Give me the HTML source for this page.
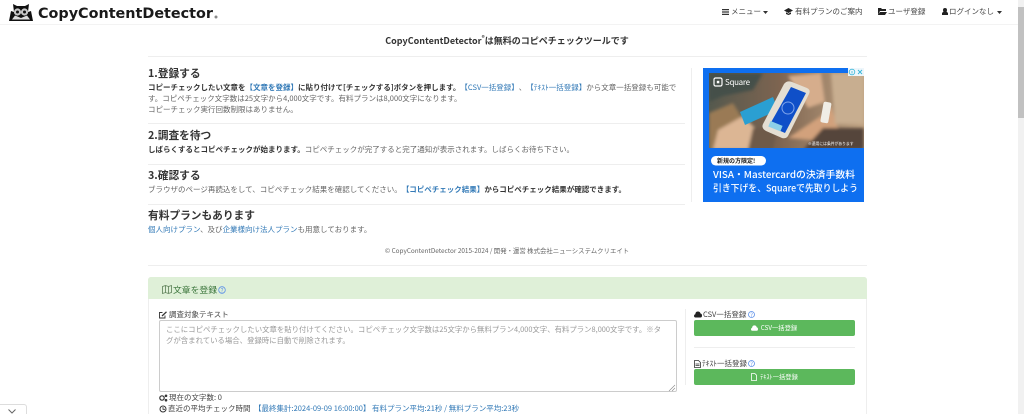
<!DOCTYPE html>
<html lang="ja">
<head>
<meta charset="utf-8">
<title>CopyContentDetector</title>
<style>
html,body{margin:0;padding:0;width:1024px;height:414px;overflow:hidden;background:#fff}
body{position:relative;font-family:"Noto Sans CJK JP","Liberation Sans",sans-serif;color:#333;text-spacing-trim:space-all}
#w{position:absolute;left:0;top:0;width:1024px;height:414px;overflow:hidden;filter:blur(.3px)}
.t{position:absolute;white-space:nowrap;font-size:7.5px;line-height:11px;color:#444}
.h{position:absolute;white-space:nowrap;font-size:10.7px;line-height:16px;font-weight:700;color:#333}
.r{position:absolute;height:1px;background:#eee}
a{color:#337ab7;text-decoration:none}
b{font-weight:700;color:#333}
.g{color:#666}
.btn{position:absolute;left:694px;width:161px;height:16px;background:#5cb85c;border-radius:2px;color:#fff;font-size:6.300px;line-height:16px;text-align:center}
svg{position:absolute;overflow:visible}
svg text{font-family:"Noto Sans CJK JP","Liberation Sans",sans-serif}
</style>
</head>
<body>
<div id="w">
<!-- header -->
<div class="r" style="left:0;top:24px;width:1018px;background:#f3f3f3"></div>
<svg style="left:9px;top:3px" width="24" height="18" viewBox="0 0 24 18">
<path d="M0 18 L2 8 L5 9 L4 1 L8 3 L16 3 L20 1 L19 9 L22 8 L24 18 Z" fill="#111"/>
<circle cx="8.500" cy="9" r="3.600" fill="#c8c8c8"/><circle cx="15.500" cy="9" r="3.600" fill="#c8c8c8"/>
<circle cx="8.500" cy="9" r="1.500" fill="#111"/><circle cx="15.500" cy="9" r="1.500" fill="#111"/>
<path d="M3 16.500 L6 12.500 L12 15 L18 12.500 L21 16.500 Z" fill="#ddd"/>
</svg>
<svg style="left:38px;top:4px" width="182" height="18">
<text x="0" y="14" style="font-family:'DejaVu Sans','Liberation Sans',sans-serif" font-weight="700" font-size="14.500" fill="#1a1a1a" textLength="175" lengthAdjust="spacingAndGlyphs">CopyContentDetector</text>
<circle cx="178" cy="13" r="1.500" fill="#888"/>
</svg>

<svg style="left:722px;top:8.500px" width="7" height="6" fill="#333"><path d="M0 0H7V1.200H0ZM0 2.400H7V3.600H0ZM0 4.800H7V6H0Z"/></svg>
<div class="t" style="left:731px;top:6px">メニュー</div>
<svg style="left:763px;top:10.500px" width="5" height="3" fill="#333"><path d="M0 0H5L2.500 3Z"/></svg>
<svg style="left:784px;top:8px" width="9" height="7" fill="#222"><path d="M0 2.500L4.500 0L9 2.500L4.500 5ZM2 4.300V6L4.500 7L7 6V4.300L4.500 5.700Z"/></svg>
<div class="t" style="left:795px;top:6px">有料プランのご案内</div>
<svg style="left:878px;top:8px" width="9" height="7"><path d="M0 0H3L4 1H8V3H2L0 7ZM2 4H9L7 7H0Z" fill="#222"/></svg>
<div class="t" style="left:888px;top:6px">ユーザ登録</div>
<svg style="left:942px;top:8px" width="6" height="7"><circle cx="3" cy="2" r="2" fill="#222"/><path d="M0 7V5L1.500 3.500H4.500L6 5V7Z" fill="#222"/></svg>
<div class="t" style="left:949px;top:6px">ログインなし</div>
<svg style="left:997px;top:10.500px" width="5" height="3" fill="#333"><path d="M0 0H5L2.500 3Z"/></svg>

<!-- title -->
<div class="t" style="left:0;top:34px;width:1014px;text-align:center;font-size:9px;line-height:14px;font-weight:700;color:#333">CopyContentDetector<sup style="font-size:6px;line-height:0">®</sup>は無料のコピペチェックツールです</div>
<div class="r" style="left:148px;top:56px;width:719px"></div>

<!-- steps -->
<div class="h" style="left:148px;top:66px">1.登録する</div>
<div class="t g" style="left:148px;top:82px"><b>コピーチェックしたい文章を</b><a href="#"><b style="color:#337ab7">【文章を登録】</b></a><b>に貼り付けて[チェックする]ボタンを押します。</b><a href="#">【CSV一括登録】</a>、<a href="#">【ﾃｷｽﾄ一括登録】</a>から文章一括登録も可能で</div>
<div class="t g" style="left:148px;top:93px">す。コピペチェック文字数は25文字から4,000文字です。有料プランは8,000文字になります。</div>
<div class="t g" style="left:148px;top:104px">コピーチェック実行回数制限はありません。</div>
<div class="r" style="left:148px;top:123px;width:537px"></div>

<div class="h" style="left:148px;top:128px">2.調査を待つ</div>
<div class="t g" style="left:148px;top:144px"><b>しばらくするとコピペチェックが始まります。</b>コピペチェックが完了すると完了通知が表示されます。しばらくお待ち下さい。</div>
<div class="r" style="left:148px;top:164px;width:537px"></div>

<div class="h" style="left:148px;top:168px">3.確認する</div>
<div class="t g" style="left:148px;top:184px">ブラウザのページ再読込をして、コピペチェック結果を確認してください。<a href="#"><b style="color:#337ab7">【コピペチェック結果】</b></a><b>からコピペチェック結果が確認できます。</b></div>
<div class="r" style="left:148px;top:204px;width:537px"></div>

<div class="h" style="left:148px;top:208px">有料プランもあります</div>
<div class="t g" style="left:148px;top:224px"><a href="#">個人向けプラン</a>、及び<a href="#">企業様向け法人プラン</a>も用意しております。</div>

<div class="r" style="left:691px;top:68px;width:1px;height:134px"></div>

<!-- ad -->
<svg style="left:703px;top:68px" width="162" height="134" viewBox="0 0 162 134">
<defs>
<clipPath id="ph"><rect x="6" y="5" width="155" height="75"/></clipPath>
<filter id="bl"><feGaussianBlur stdDeviation="1.500"/></filter>
<linearGradient id="bg" x1="0" y1="0" x2="1" y2="0"><stop offset="0" stop-color="#55594e"/><stop offset=".45" stop-color="#7d6450"/><stop offset="1" stop-color="#bfa282"/></linearGradient>
</defs>
<rect width="161" height="134" fill="#0e6ff0"/>
<g clip-path="url(#ph)">
<rect x="6" y="5" width="155" height="75" fill="url(#bg)"/>
<g filter="url(#bl)">
<path d="M6 5H60L50 22L20 28L6 34Z" fill="#454f4a"/>
<path d="M6 45L30 35L45 60L40 82H6Z" fill="#9a7a54"/>
<path d="M10 82L15 62L40 48L52 60L47 82Z" fill="#dcb694"/>
<path d="M85 8L118 5L122 34L105 40Z" fill="#d6ad8c"/>
<path d="M85 70L118 48L128 38L135 60L110 72Z" fill="#d2a17c"/>
<path d="M120 60H161V82H100Z" fill="#54443a"/>
<path d="M128 5H161V56H132Z" fill="#c8ae90"/>
<path d="M50 60L75 58L70 82H45Z" fill="#6e5a4a"/>
</g>
<path d="M37 44L70 29L75 42L42 57Z" fill="#2a9fd2"/>
<rect x="119" y="34" width="8" height="21" rx="2" fill="#f0ede6" transform="rotate(10 123 44)"/>
<path d="M89 14L104 20Q108 22 106 26L85 68Q83 71 79 70L63 63Q58 60 60 56L81 16Q84 12 89 14Z" fill="#e4ded2"/>
<path d="M88 19L103 25L82 65L66 58Z" fill="#0f4fc8"/>
<circle cx="85" cy="40" r="6" fill="none" stroke="#7ea4ec" stroke-width="1"/>
<rect x="66" y="55" width="13" height="6" fill="#8dd0e8" transform="rotate(22 72 58)"/>
</g>
<rect x="11" y="10" width="8" height="8" rx="1.500" fill="none" stroke="#fff" stroke-width="1.200"/>
<rect x="13.800" y="12.800" width="2.500" height="2.500" fill="#fff"/>
<text x="22" y="17" font-size="8" fill="#fff" textLength="25">Square</text>
<text x="105" y="77" font-size="3.800" fill="#fff">※適用には条件があります</text>
<rect x="8" y="88" width="55" height="9.500" rx="4.700" fill="#fff"/>
<text x="14" y="95" font-size="6" font-weight="700" fill="#222">新規の方限定!</text>
<text x="10" y="110" font-size="9.500" font-weight="500" fill="#fff" textLength="142" lengthAdjust="spacingAndGlyphs">VISA・Mastercardの決済手数料</text>
<text x="10" y="123.500" font-size="9.500" font-weight="500" fill="#fff" textLength="145" lengthAdjust="spacingAndGlyphs">引き下げを、Squareで先取りしよう</text>
<rect x="145" y="0" width="16" height="8" fill="#eef6fb"/>
<circle cx="149" cy="4" r="2.800" fill="none" stroke="#35b5d8" stroke-width=".8"/>
<path d="M149 3V5.500" stroke="#35b5d8" stroke-width=".8"/>
<path d="M155 2L159 6M159 2L155 6" stroke="#35b5d8" stroke-width=".9"/>
</svg>

<!-- footer line -->
<div class="t g" style="left:192px;top:245px;width:630px;text-align:center;font-size:6.400px">© CopyContentDetector 2015-2024 / 開発・運営 株式会社ニューシステムクリエイト</div>
<div class="r" style="left:148px;top:265px;width:719px"></div>

<!-- panel -->
<div style="position:absolute;left:148px;top:277px;width:717px;height:150px;border:1px solid #eee;border-radius:3px"></div>
<div style="position:absolute;left:148px;top:277px;width:719px;height:22px;background:#dff0d8;border-radius:3px 3px 0 0"></div>
<svg style="left:162px;top:285px" width="10" height="9" fill="none" stroke="#5a7d55" stroke-width=".8"><path d="M.5 1.500L3.500.5L6.500 1.500L9.500.5V7.500L6.500 8.500L3.500 7.500L.5 8.500ZM3.500.5V7.500M6.500 1.500V8.500"/></svg>
<div class="t" style="left:173px;top:284px;font-size:8.800px;color:#3c763d">文章を登録</div>
<svg style="left:218px;top:286px" width="8" height="8"><circle cx="4" cy="4" r="3.300" fill="none" stroke="#5b8fe8" stroke-width=".8"/><text x="4" y="6.300" font-size="6" text-anchor="middle" fill="#5b8fe8">?</text></svg>

<svg style="left:159px;top:311px" width="8" height="8" fill="none" stroke="#333" stroke-width=".9"><path d="M6 4.500V7H.5V1.500H3.500"/><path d="M3 5L7.500 .8" stroke-width="1.300"/></svg>
<div class="t" style="left:169px;top:309px">調査対象テキスト</div>
<div style="position:absolute;left:159px;top:320px;width:516px;height:70px;border:1px solid #ccc;border-radius:2px;background:#fff"></div>
<svg style="left:669px;top:385px" width="6" height="6" stroke="#888" stroke-width=".6"><path d="M0 6L6 0M3 6L6 3"/></svg>
<div class="t" style="left:166px;top:324px;color:#999;font-size:7.400px">ここにコピペチェックしたい文章を貼り付けてください。コピペチェック文字数は25文字から無料プラン4,000文字、有料プラン8,000文字です。※タ</div>
<div class="t" style="left:166px;top:335px;color:#999;font-size:7.400px">グが含まれている場合、登録時に自動で削除されます。</div>

<svg style="left:159px;top:394px" width="9" height="8" fill="#333"><circle cx="3" cy="4" r="2.200" fill="none" stroke="#333" stroke-width="1.200"/><circle cx="7" cy="1.800" r="1.300"/><circle cx="7" cy="6.200" r="1.300"/></svg>
<div class="t" style="left:169px;top:392px">現在の文字数: 0</div>
<svg style="left:159px;top:405px" width="8" height="8" fill="none" stroke="#333"><circle cx="4" cy="4" r="3"/><path d="M4 2V4.300H6" stroke-width=".8"/></svg>
<div class="t" style="left:168px;top:403px">直近の平均チェック時間<a href="#" style="position:absolute;left:86px;top:0">【最終集計:2024-09-09 16:00:00】</a><a href="#" style="position:absolute;left:204px;top:0">有料プラン平均:21秒 / 無料プラン平均:23秒</a></div>

<div class="r" style="left:685px;top:309px;width:1px;height:76px"></div>

<svg style="left:694px;top:311px" width="8" height="7"><path d="M1.500 6.500Q0 6.500 0 4.800Q0 3.500 1.300 3.200Q1.500 .5 4 .5Q6 .5 6.500 2.500Q8 2.800 8 4.500Q8 6.500 6.500 6.500Z" fill="#222"/></svg>
<div class="t" style="left:703px;top:309px">CSV一括登録</div>
<svg style="left:748px;top:311px" width="7" height="7"><circle cx="3.500" cy="3.500" r="3" fill="none" stroke="#5b8fe8" stroke-width=".8"/><text x="3.500" y="5.800" font-size="5.500" text-anchor="middle" fill="#5b8fe8">?</text></svg>
<div class="btn" style="top:320px"><svg style="left:57px;top:5px" width="7" height="6"><path d="M1.300 5.800Q0 5.800 0 4.300Q0 3.100 1.100 2.800Q1.300 .4 3.500 .4Q5.200 .4 5.700 2.200Q7 2.500 7 4Q7 5.800 5.700 5.800Z" fill="#fff"/></svg><span style="margin-left:9px">CSV一括登録</span></div>
<div class="r" style="left:694px;top:347px;width:161px"></div>
<svg style="left:694px;top:360px" width="7" height="8" fill="none" stroke="#333" stroke-width=".8"><path d="M.5.500H4.500L6.500 2.500V7.500H.5Z"/><path d="M1.500 4H5.500M1.500 5.500H5.500"/></svg>
<div class="t" style="left:702px;top:358px">ﾃｷｽﾄ一括登録</div>
<svg style="left:748px;top:360px" width="7" height="7"><circle cx="3.500" cy="3.500" r="3" fill="none" stroke="#5b8fe8" stroke-width=".8"/><text x="3.500" y="5.800" font-size="5.500" text-anchor="middle" fill="#5b8fe8">?</text></svg>
<div class="btn" style="top:369px"><svg style="left:57px;top:4px" width="6" height="8" fill="none" stroke="#fff" stroke-width=".8"><path d="M.5.500H3.800L5.500 2.200V7.500H.5Z"/></svg><span style="margin-left:9px">ﾃｷｽﾄ一括登録</span></div>

<!-- bottom-left toggle -->
<div style="position:absolute;left:-1px;top:404px;width:28px;height:12px;background:#fff;border:1px solid #ddd;border-radius:0 3px 0 0;box-sizing:border-box"></div>
<svg style="left:8px;top:409px" width="8" height="5" fill="none" stroke="#666" stroke-width="1"><path d="M.5.500L4 4L7.500.5"/></svg>

<!-- scrollbar -->
<div style="position:absolute;left:1018px;top:0;width:6px;height:414px;background:#f1f1f1"></div>
<div style="position:absolute;left:1018px;top:7px;width:6px;height:111px;background:#c1c1c1"></div>
</div>
</body>
</html>
